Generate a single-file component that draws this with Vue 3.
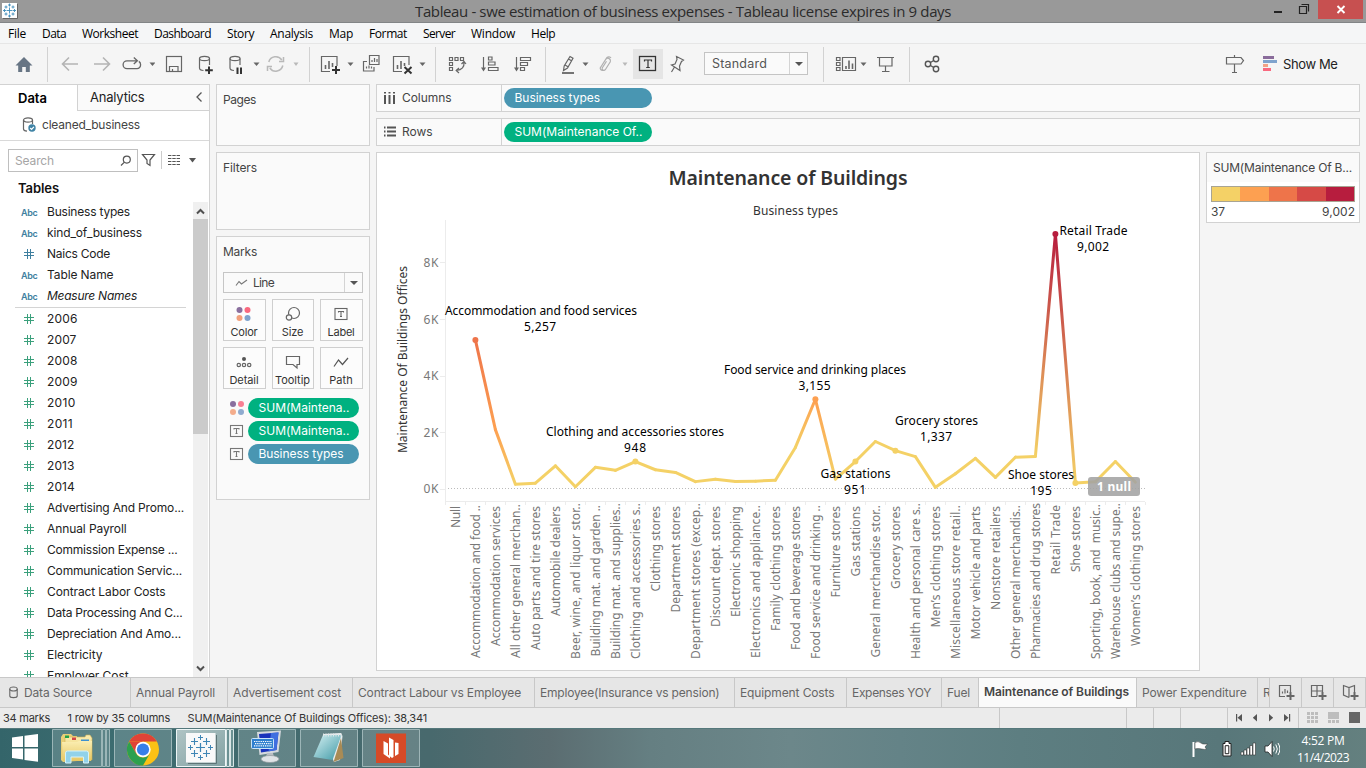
<script setup>
// v-fit: spreads a label's letters evenly so that it takes the given width
const vFit = {
  mounted(el, { value }) {
    const natural = el.getBoundingClientRect().width
    const count = el.textContent.trim().length
    if (value && count) el.style.letterSpacing = (value - natural) / count + 'px'
  },
}

const menus = [
  ['File', 18, 20], ['Data', 24, 18], ['Worksheet', 56, 16], ['Dashboard', 57, 16], ['Story', 27, 16],
  ['Analysis', 43, 16], ['Map', 24, 16], ['Format', 38, 16], ['Server', 32, 16], ['Window', 44, 16], ['Help', 24, 16],
]

const dimensions = [
  ['Business types', 83, 'abc'], ['kind_of_business', 95, 'abc'], ['Naics Code', 63, 'num'],
  ['Table Name', 66.5, 'abc'], ['Measure Names', 90, 'abc', true],
]
const measures = [
  ['2006', 30.5], ['2007', 29.5], ['2008', 30.5], ['2009', 30.5], ['2010', 28.5], ['2011', 26], ['2012', 27.5],
  ['2013', 27.5], ['2014', 28], ['Advertising And Promo...', 137], ['Annual Payroll', 79.5],
  ['Commission Expense ...', 130.5], ['Communication Servic...', 135], ['Contract Labor Costs', 118.5],
  ['Data Processing And C...', 135.5], ['Depreciation And Amo...', 134], ['Electricity', 55.5], ['Employer Cost', 81.5],
]

const palette = ['#f4d166', '#fda051', '#ee744a', '#d64a46', '#b71d3e']
const series = [
  [5257, 'Accommodation and food ..', 505, 658], [2080, 'Accommodation services', 506, 646],
  [150, 'All other general merchan..', 504, 658], [185, 'Auto parts and tire stores', 506, 650],
  [800, 'Automobile dealers', 506, 616], [60, 'Beer, wine, and liquor stor..', 503, 659],
  [745, 'Building mat. and garden ..', 505, 656.5], [640, 'Building mat. and supplies..', 503, 659],
  [948, 'Clothing and accessories s..', 503, 659], [660, 'Clothing stores', 506, 591.5],
  [565, 'Department stores', 506, 612.5], [240, 'Department stores (excep..', 503, 659],
  [320, 'Discount dept. stores', 506, 627], [245, 'Electronic shopping', 506, 617],
  [255, 'Electronics and appliance..', 505, 658], [290, 'Family clothing stores', 506, 631],
  [1450, 'Food and beverage stores', 506, 650], [3155, 'Food service and drinking ..', 505, 659],
  [330, 'Furniture stores', 506, 597.5], [951, 'Gas stations', 506, 576.5],
  [1660, 'General merchandise stor..', 505, 657.5], [1337, 'Grocery stores', 506, 589],
  [1125, 'Health and personal care s..', 503, 659], [37, 'Men’s clothing stores', 506, 627.5],
  [520, 'Miscellaneous store retail..', 505, 659], [1065, 'Motor vehicle and parts', 506, 639.5],
  [390, 'Nonstore retailers', 506, 610], [1105, 'Other general merchandis..', 505, 659],
  [1130, 'Pharmacies and drug stores', 503, 659], [9002, 'Retail Trade', 505, 574.5],
  [195, 'Shoe stores', 506, 572], [235, 'Sporting, book, and  music..', 504, 659],
  [950, 'Warehouse clubs and supe..', 503, 659], [220, 'Women’s clothing stores', 506, 646],
]
const px = (i) => 475.4 + i * 20
const py = (v) => 488.4 - v * 0.02825
const tone = (v) => palette[Math.min(4, Math.floor((v - 37) / 1793))]
const segments = series.slice(1).map((s, i) => ({
  id: 'seg' + i,
  x1: px(i), y1: py(series[i][0]), x2: px(i + 1), y2: py(s[0]),
  from: tone(series[i][0]), to: tone(s[0]),
}))
const dots = [0, 8, 17, 19, 21, 29, 30].map((i) => ({ x: px(i), y: py(series[i][0]), c: tone(series[i][0]) }))
const axisLabels = [{ x: 455.4, name: 'Null', top: 506, len: 22 }].concat(
  series.map((s, i) => ({ x: px(i), name: s[1], top: s[2], len: s[3] - s[2] })),
)
const notes = [
  ['Accommodation and food services', 541, 315, 192, '5,257', 540, 331, 32],
  ['Clothing and accessories stores', 635, 436, 178, '948', 635, 452, 22],
  ['Food service and drinking places', 815, 374, 182, '3,155', 814.5, 390, 32],
  ['Grocery stores', 936.5, 425, 83, '1,337', 936, 441, 32],
  ['Gas stations', 855.5, 478, 70, '951', 855, 494, 22],
  ['Shoe stores', 1041, 479, 66, '195', 1041, 495, 21.5],
  ['Retail Trade', 1093.5, 235, 68, '9,002', 1093, 251, 32],
]
const ticks = [['8K', 262.4], ['6K', 319.4], ['4K', 375.6], ['2K', 432.4], ['0K', 488.5]]

const sheets = [
  ['Annual Payroll', 97, 79], ['Advertisement cost', 125, 108], ['Contract Labour vs Employee', 182, 163],
  ['Employee(Insurance vs pension)', 200, 179.5], ['Equipment Costs', 112, 94.5], ['Expenses YOY', 95, 79],
  ['Fuel', 37, 23], ['Maintenance of Buildings', 158, 145, true], ['Power Expenditure', 121, 104.5], ['R', 12, 8],
]
</script>

<template>
  <div class="screen">
    <header class="titlebar">
      <svg width="24" height="23">
        <rect x="2" y="3" width="15" height="15" fill="#fff" />
        <path d="M17.500 4v14.500H3" stroke="#666" fill="none" />
        <path d="M9.500 7.500v6M6.500 10.500h6M9.500 3.500v3M8 5h3M9.500 14.500v3M8 16h3M3 10.500h3M4.500 9v3M13 10.500h3M14.500 9v3M6 5.500v3M4.500 7h3M13 5.500v3M11.500 7h3M6 12.500v3M4.500 14h3M13 12.500v3M11.500 14h3" stroke="#3f8dbb" stroke-width=".9" fill="none" />
      </svg>
      <span class="t caption" v-fit="536">Tableau - swe estimation of business expenses - Tableau license expires in 9 days</span>
      <svg class="winbtns" width="96" height="23" viewBox="1270 0 96 23">
        <path d="M1274 12h8" stroke="#222" stroke-width="2" />
        <path d="M1299.500 6.500h7v7h-7zM1301.500 4.500h7v7" stroke="#222" stroke-width="1.200" fill="none" />
        <rect x="1318" y="0" width="45" height="19" fill="#c75050" />
        <path d="M1337.500 6l7 7M1344.500 6l-7 7" stroke="#fff" stroke-width="1.900" />
      </svg>
    </header>

    <nav class="menubar">
      <span v-for="m in menus" :key="m[0]" class="t" v-fit="m[1]">{{ m[0] }}</span>
    </nav>

    <section class="toolbar">
      <svg width="48" height="40" viewBox="0 44 48 40">
        <path d="M24 57l8.500 8.500h-2.700V72h-4v-5h-3.600v5h-4v-6.500h-2.700z" fill="#677584" />
        <path d="M47.500 47v35" stroke="#d2d2d2" />
      </svg>
      <svg width="107" height="40" viewBox="48 44 107 40" fill="none">
        <path d="M78 64H63M69 57.500L62.500 64l6.500 6.500M94 64h15M103 57.500l6.500 6.500-6.500 6.500" stroke="#b4b4b4" stroke-width="1.600" />
        <path d="M136.500 60.800H127a3.900 3.900 0 000 7.800h10a3.700 3.700 0 003.600-3.800c0-1.500-.6-2.700-1.800-3.400M133.800 57.500l3.600 3.300-3.600 3.300" stroke="#666" stroke-width="1.300" />
        <path d="M149.500 62.500h6l-3 3.500z" fill="#666" />
      </svg>
      <svg width="154" height="40" viewBox="155 44 154 40" fill="none" stroke="#666" stroke-width="1.200">
        <rect x="166.500" y="56.500" width="15" height="15" /><path d="M169.500 71v-4.500h8.500V71M172.500 71v-2" />
        <ellipse cx="204.500" cy="58.500" rx="5" ry="2.200" /><path d="M199.500 58.500v9.500c0 1.500 1.500 2.300 4 2.500M209.500 58.500V65" />
        <path d="M209 66.500v7.500M205.200 70.200h7.600" stroke="#333" stroke-width="2" />
        <ellipse cx="235" cy="58.500" rx="5" ry="2.200" /><path d="M230 58.500v9.500c0 1.500 1.500 2.300 4 2.500M240 58.500V65" />
        <path d="M237.500 67.500v6.500M241 67.500v6.500" stroke="#333" stroke-width="2" />
        <path d="M253.500 62.500h6l-3 3.500z" fill="#666" stroke="none" />
        <g stroke="#b9b9b9" stroke-width="1.500"><path d="M268.800 62a7.200 7.200 0 0113-2M282.800 65.500a7.200 7.200 0 01-13 2.500M283.500 57v4.500h-4.500M267.500 71v-4.500h4.500" /></g>
        <path d="M293.500 62.500h5l-2.500 3.500z" fill="#b9b9b9" stroke="none" />
      </svg>
      <svg width="126" height="40" viewBox="309 44 126 40" fill="none" stroke="#666" stroke-width="1.200">
        <path d="M309.500 47v35" stroke="#d2d2d2" stroke-width="1" />
        <path d="M330 71.500h-8.500v-15h15.500V66" /><path d="M325.500 65v4M329 61v8M332.500 63v4" stroke-width="1.600" />
        <path d="M336 66v8M332 70h8" stroke="#333" stroke-width="2" />
        <path d="M347.500 62.500h6l-3 3.500z" fill="#666" stroke="none" />
        <path d="M369.500 55.500h9.500v9h-9.500zM367 61.500h-3.500v9.500H374v-4M366.500 66.500v2M369 65.500v3M371.500 66.500v2M372 60v2M374.500 58v4M377 59v3" />
        <path d="M402 71.500h-8.500v-15h15.500V65" /><path d="M397.500 65v4M401 61v8M404.500 63v3" stroke-width="1.600" />
        <path d="M404.500 67l7 6.500M411.500 67l-7 6.500" stroke="#333" stroke-width="2" />
        <path d="M419.500 62.500h6l-3 3.500z" fill="#666" stroke="none" />
      </svg>
      <svg width="110" height="40" viewBox="435 44 110 40" fill="none" stroke="#666" stroke-width="1.200">
        <path d="M435.500 47v35" stroke="#d2d2d2" stroke-width="1" />
        <path d="M449.500 57.500h3v3h-3zM455 57.500h3v3h-3zM460.500 57.500h3v3h-3zM449.500 62.500h3v3h-3zM449.500 67.500h3v3h-3zM464 62c.5 5-2 8-7.500 8.500M461.500 64l2.500-2.500 2 2.500M459 68l-2.800 2.500L459 73" />
        <path d="M483.500 57v12" /><path d="M481 67.500h5l-2.500 4zM514 67.500h5l-2.500 4z" fill="#666" stroke="none" /><path d="M516.500 57v12" />
        <path d="M488.500 57h3.500v3h-3.500zM488.500 62h6.500v3h-6.500zM488.500 67.500h9.500v3h-9.500zM520.500 57.500h10v3h-10zM520.500 62.500h7v3h-7zM520.500 67.500h4v3h-4z" />
      </svg>
      <svg width="88" height="40" viewBox="545 44 88 40" fill="none" stroke="#666" stroke-width="1.200">
        <path d="M545.500 47v35" stroke="#d2d2d2" stroke-width="1" />
        <path d="M570 56.500l3 1.700-5.500 9.800-4 2.500.7-4.500zM565 65l3 1.800M568.500 59l3 1.800" /><path d="M562 73h12" stroke-width="1.800" />
        <path d="M582.500 62.500h6l-3 3.500z" fill="#666" stroke="none" />
        <path d="M600.500 67.500l5.500-8.500a2.600 2.600 0 014.300 2.700l-5 8a1.800 1.800 0 01-3.100-1.700l4.300-6.700M605 60.500l2-3a2.600 2.600 0 014 .5M600.500 67c-1 2.500 1 4 3 3" stroke="#b0b0b0" />
        <path d="M622.500 62.500h5l-2.500 3.500z" fill="#b9b9b9" stroke="none" />
      </svg>
      <div class="labelbtn">
        <svg width="30" height="30" viewBox="633 49 30 30" fill="none" stroke="#333" stroke-width="1.300">
          <rect x="639.500" y="56.500" width="16" height="14" />
          <path d="M644.500 61.500v-1.500h7v1.500M648 60v7.500M646.200 67.500h3.600" stroke-width="1.200" />
        </svg>
      </div>
      <svg class="pin" width="41" height="40" viewBox="663 44 41 40" fill="none" stroke="#666" stroke-width="1.200">
        <path d="M676.500 56.500l7 3.500-2 1.500-2 4.500.5 4.500-8.500-5.500 3.500-1 2-4.500zM674.500 67l-3 5" />
      </svg>
      <div class="fitbox"><span class="t" v-fit="55">Standard</span><i class="caret"></i></div>
      <svg width="109" height="40" viewBox="808 44 109 40" fill="none" stroke="#666" stroke-width="1.200">
        <path d="M823.500 47v35M909.500 47v35" stroke="#d2d2d2" stroke-width="1" />
        <path d="M842.500 57.500h13v13h-13zM836.500 57.500h3.500v3h-3.500zM836.500 62.500h3.500v3h-3.500zM836.500 67.500h3.500v3h-3.500z" />
        <path d="M846 66v3M849 60.500V69M852.500 63.500V69" stroke-width="1.600" />
        <path d="M860.500 62.500h6l-3 3.500z" fill="#666" stroke="none" />
        <path d="M877 57.500h17M879.500 57.500v8.500h12.500v-8.500M885.500 66v5M882 71.500h7.500" />
      </svg>
      <svg width="40" height="40" viewBox="917 44 40 40" fill="none" stroke="#555" stroke-width="1.400">
        <circle cx="936" cy="59" r="2.700" /><circle cx="928" cy="64" r="2.700" /><circle cx="936" cy="69" r="2.700" />
        <path d="M930.500 62.500l3.200-2M930.500 65.500l3.200 2" />
      </svg>
      <div class="showme">
        <svg width="60" height="40" viewBox="1222 44 60 40" fill="none">
          <path d="M1226.500 57.500h14.500l2.500 3-2.500 3.500h-14.500zM1234.500 55v2.500M1234.500 64v8M1232 72.500h5" stroke="#666" stroke-width="1.200" />
          <path d="M1263 57.500h11" stroke="#8a6c9b" stroke-width="3" /><path d="M1263 61.500h14" stroke="#7fa3cd" stroke-width="3" />
          <path d="M1263 65.500h5" stroke="#f2a285" stroke-width="3" /><path d="M1263 69.500h8" stroke="#f9697f" stroke-width="3" />
        </svg>
        <span class="t" v-fit="54.500">Show Me</span>
      </div>
    </section>

    <main class="work">
      <aside class="side">
        <div class="tabs">
          <div class="tab on"><span class="t" v-fit="29">Data</span></div>
          <div class="tab"><span class="t" v-fit="54.500">Analytics</span>
            <svg width="8" height="12"><path d="M6.500 1.500L2 6l4.500 4.500" fill="none" stroke="#555" stroke-width="1.300" /></svg>
          </div>
        </div>
        <div class="source">
          <svg width="16" height="18" fill="none" stroke="#666" stroke-width="1.200">
            <ellipse cx="6" cy="4" rx="4.500" ry="2.200" /><path d="M1.500 4v9c0 1.200 1.500 2 3.500 2.200M10.500 4v4" />
            <circle cx="10" cy="12" r="3.700" fill="#3f83a5" stroke="none" /><path d="M8.200 12l1.400 1.400 2.300-2.600" stroke="#fff" />
          </svg>
          <span class="t" v-fit="98">cleaned_business</span>
        </div>
        <div class="searchrow">
          <div class="search"><span class="t" v-fit="39">Search</span>
            <svg width="12" height="12" fill="none" stroke="#555" stroke-width="1.200"><circle cx="6.800" cy="4.600" r="3.500" /><path d="M4.200 7.300L1 10.500" /></svg>
          </div>
          <svg width="60" height="22" viewBox="141 149 60 22">
            <path d="M142.500 154.500h12l-4.500 5.500v5.500l-3-2v-3.500z" fill="none" stroke="#555" stroke-width="1.200" />
            <path d="M161.500 151v18" stroke="#ccc" />
            <path d="M168 155.500h12M168 158.500h12M168 161.500h12M168 164.500h12" stroke="#555" stroke-dasharray="3.400 .9" stroke-width="1.200" />
            <path d="M189 158h7l-3.500 4.500z" fill="#555" />
          </svg>
        </div>
        <h3><span class="t" v-fit="41">Tables</span></h3>
        <div class="fields">
          <ul class="list">
            <li v-for="d in dimensions" :key="d[0]">
              <span v-if="d[2] === 'abc'" class="abc"><b class="t" v-fit="16.500">Abc</b></span>
              <svg v-else class="hash" width="10" height="10"><path d="M3.500 0v10M6.500 0v10M0 3.500h10M0 6.500h10" stroke="#3f7f9f" /></svg>
              <span class="t" :class="{ it: d[3] }" v-fit="d[1]">{{ d[0] }}</span>
            </li>
            <li class="rule"></li>
            <li v-for="m in measures" :key="m[0]">
              <svg class="hash" width="10" height="10"><path d="M3.500 0v10M6.500 0v10M0 3.500h10M0 6.500h10" stroke="#3ba07c" /></svg>
              <span class="t" v-fit="m[1]">{{ m[0] }}</span>
            </li>
          </ul>
          <div class="scroll">
            <svg width="15" height="17"><path d="M4 11.500L7.500 8l3.500 3.500" fill="none" stroke="#505050" stroke-width="2" /></svg>
            <i></i>
            <svg width="15" height="17"><path d="M4 6.500L7.500 10 11 6.500" fill="none" stroke="#505050" stroke-width="2" /></svg>
          </div>
        </div>
      </aside>

      <div class="cards">
        <section class="card pages"><span class="t" v-fit="33">Pages</span></section>
        <section class="card filters"><span class="t" v-fit="34">Filters</span></section>
        <section class="card marks">
          <span class="t" v-fit="34">Marks</span>
          <div class="select">
            <svg width="14" height="8"><path d="M1 6.500l3-4 2.500 2.500L12 1" fill="none" stroke="#777" stroke-width="1.100" /></svg>
            <span class="t" v-fit="21">Line</span><i class="caret"></i>
          </div>
          <div class="grid">
            <div>
              <svg width="20" height="20"><circle cx="5.500" cy="6" r="3" fill="#8a6f9e" /><circle cx="13.500" cy="6" r="3" fill="#f9697f" /><circle cx="5.500" cy="14" r="3" fill="#f2a07c" /><circle cx="13.500" cy="14" r="3" fill="#7fa3cd" /></svg>
              <span class="t" v-fit="27">Color</span>
            </div>
            <div>
              <svg width="20" height="20" fill="none" stroke="#666" stroke-width="1.200"><circle cx="11" cy="9" r="5.500" /><circle cx="6" cy="13.500" r="2.700" fill="#fcfcfc" /></svg>
              <span class="t" v-fit="21.500">Size</span>
            </div>
            <div>
              <svg width="20" height="20" fill="none" stroke="#666" stroke-width="1.100"><rect x="4" y="4.500" width="12" height="11" /><path d="M7.500 8.500v-1h5v1M10 7.500v5M9 12.500h2" /></svg>
              <span class="t" v-fit="27">Label</span>
            </div>
            <div>
              <svg width="20" height="20" fill="none" stroke="#666" stroke-width="1.200"><circle cx="10" cy="7" r="2" fill="#555" stroke="none" /><circle cx="4.800" cy="13" r="1.700" /><circle cx="10" cy="13" r="1.700" /><circle cx="15.200" cy="13" r="1.700" /></svg>
              <span class="t" v-fit="29">Detail</span>
            </div>
            <div>
              <svg width="20" height="20" fill="none" stroke="#666" stroke-width="1.200"><path d="M3.500 4.500h13v8h-2.500v3.500l-4-3.500H3.500z" /></svg>
              <span class="t" v-fit="35">Tooltip</span>
            </div>
            <div>
              <svg width="20" height="20" fill="none" stroke="#555" stroke-width="1.200"><path d="M3 14.500l4.500-6.500 4 4.500L17 6" /></svg>
              <span class="t" v-fit="23.500">Path</span>
            </div>
          </div>
          <div class="enc">
            <svg width="18" height="20"><circle cx="4" cy="6" r="3" fill="#8a6f9e" /><circle cx="12" cy="6" r="3" fill="#f98093" /><circle cx="4" cy="14" r="3" fill="#f4ad8c" /><circle cx="12" cy="14" r="3" fill="#8fabcf" /></svg>
            <div class="pill green"><span class="t" v-fit="91">SUM(Maintena..</span></div>
          </div>
          <div class="enc">
            <svg width="18" height="20" fill="none" stroke="#777" stroke-width="1.100"><rect x="1.500" y="4.500" width="12" height="11" /><path d="M5 8.500v-1h5v1M7.500 7.500v5M6.500 12.500h2" /></svg>
            <div class="pill green"><span class="t" v-fit="91">SUM(Maintena..</span></div>
          </div>
          <div class="enc">
            <svg width="18" height="20" fill="none" stroke="#777" stroke-width="1.100"><rect x="1.500" y="4.500" width="12" height="11" /><path d="M5 8.500v-1h5v1M7.500 7.500v5M6.500 12.500h2" /></svg>
            <div class="pill blue"><span class="t" v-fit="85">Business types</span></div>
          </div>
        </section>
      </div>

      <div class="canvas">
        <div class="shelf">
          <div class="name">
            <svg width="18" height="16"><path d="M1 2v1.500M1 5v9M5.500 2v1.500M5.500 5v9M10 2v1.500M10 5v9" stroke="#555" stroke-width="2" /></svg>
            <span class="t" v-fit="49.500">Columns</span>
          </div>
          <div class="pill blue"><span class="t" v-fit="85.500">Business types</span></div>
        </div>
        <div class="shelf">
          <div class="name">
            <svg width="18" height="16"><path d="M0 3.500h1.500M3 3.500h9M0 7.500h1.500M3 7.500h9M0 11.500h1.500M3 11.500h9" stroke="#555" stroke-width="1.800" /></svg>
            <span class="t" v-fit="30.500">Rows</span>
          </div>
          <div class="pill green"><span class="t" v-fit="128">SUM(Maintenance Of..</span></div>
        </div>
        <div class="stage">
          <div class="viz">
            <svg width="822" height="517" viewBox="377 153 822 517">
              <defs>
                <linearGradient v-for="s in segments" :id="s.id" :key="s.id" gradientUnits="userSpaceOnUse" :x1="s.x1" :y1="s.y1" :x2="s.x2" :y2="s.y2">
                  <stop offset="0" :stop-color="s.from" /><stop offset="1" :stop-color="s.to" />
                </linearGradient>
              </defs>
              <text x="788" y="185" class="ctitle" textLength="239">Maintenance of Buildings</text>
              <text x="795.500" y="215" class="chead" textLength="85">Business types</text>
              <text transform="translate(406.500 359.500) rotate(-90)" class="chead" textLength="187">Maintenance Of Buildings Offices</text>
              <path d="M445.500 220v285M445 501.500h700" stroke="#ececec" fill="none" />
              <path v-for="n in 35" :key="n" :d="`M${445.500 + n * 20} 502v3`" stroke="#ececec" />
              <path d="M448 488.500h697" stroke="#bbb" stroke-dasharray="1 2" />
              <g v-for="k in ticks" :key="k[0]">
                <path :d="`M440 ${Math.round(k[1]) + 0.500}h5`" stroke="#ececec" />
                <text x="438.500" :y="k[1] + 4.500" class="tick" textLength="15">{{ k[0] }}</text>
              </g>
              <text v-for="a in axisLabels" :key="a.name" class="xl" :transform="`translate(${a.x + 4.300} ${a.top}) rotate(-90)`" :textLength="a.len">{{ a.name }}</text>
              <line v-for="s in segments" :key="s.id" :x1="s.x1" :y1="s.y1" :x2="s.x2" :y2="s.y2" :stroke="`url(#${s.id})`" stroke-width="3" stroke-linecap="round" />
              <circle v-for="d in dots" :key="d.x" :cx="d.x" :cy="d.y" r="3" :fill="d.c" />
              <g v-for="n in notes" :key="n[0]" class="note">
                <text :x="n[1]" :y="n[2]" :textLength="n[3]">{{ n[0] }}</text>
                <text :x="n[5]" :y="n[6]" :textLength="n[7]">{{ n[4] }}</text>
              </g>
              <rect x="1088" y="477" width="52" height="19" rx="3" fill="#a3a3a3" fill-opacity=".88" />
              <text x="1114" y="491" class="nulls" textLength="34">1 null</text>
            </svg>
          </div>
          <div class="legend">
            <div class="lhead"><span class="t" v-fit="139">SUM(Maintenance Of B...</span></div>
            <div class="ramp"><i class="c1"></i><i class="c2"></i><i class="c3"></i><i class="c4"></i><i class="c5"></i></div>
            <div class="range"><span class="t" v-fit="14">37</span><span class="t" v-fit="33">9,002</span></div>
          </div>
        </div>
      </div>
    </main>

    <nav class="sheets">
      <div class="sheet ds">
        <svg width="10" height="14" fill="none" stroke="#666" stroke-width="1.100"><ellipse cx="4.500" cy="3" rx="3.700" ry="2" /><path d="M.8 3v7c0 2.200 7.400 2.200 7.400 0V3" /></svg>
        <span class="t" v-fit="68">Data Source</span>
      </div>
      <div v-for="s in sheets" :key="s[0]" class="sheet" :class="{ active: s[3] }" :style="{ width: s[1] + 'px' }"><span class="t" v-fit="s[2]">{{ s[0] }}</span></div>
      <div class="sheet new"><svg width="31" height="29" fill="none" stroke="#666" stroke-width="1.200"><path d="M15 18.500H9.500v-11h11V14M12.500 13.500v2M15 11v4.500M17.500 12.500V15" /><path d="M20.500 14v8M16.500 18h8" stroke-width="2" /></svg></div>
      <div class="sheet new"><svg width="31" height="29" fill="none" stroke="#666" stroke-width="1.200"><path d="M15 18.500H9.500v-11h11V14M15 7.500v11M9.500 13h11" /><path d="M20.500 14v8M16.500 18h8" stroke-width="2" /></svg></div>
      <div class="sheet new"><svg width="31" height="29" fill="none" stroke="#666" stroke-width="1.200"><path d="M15 19.500L9.500 17V7.500l5.500 2 5.500-2V14M15 9.500v10" /><path d="M20.500 14v8M16.500 18h8" stroke-width="2" /></svg></div>
    </nav>

    <footer class="status">
      <span class="t" v-fit="47">34 marks</span>
      <span class="t s2" v-fit="102.500">1 row by 35 columns</span>
      <span class="t s3" v-fit="239.500">SUM(Maintenance Of Buildings Offices): 38,341</span>
      <svg width="367" height="20" viewBox="999 708 367 20">
        <path d="M999.500 708v20M1126.500 708v20M1153.500 708v20M1180.500 708v20M1227.500 708v20M1298.500 708v20" stroke="#c8c8c8" />
        <g fill="#555"><path d="M1236 714h1.200v7.500h-1.200zM1242 714v7.500l-4.500-3.700zM1257 714v7.500l-4.200-3.700zM1269 714v7.500l4.200-3.700zM1284 714v7.500l4.500-3.700zM1289 714h1.200v7.500h-1.200z" /></g>
        <g fill="#bdbdbd"><path d="M1307 712h3v3h-3zM1311 712h3v3h-3zM1315 712h3v3h-3zM1307 716h3v3h-3zM1311 716h3v3h-3zM1315 716h3v3h-3zM1307 720h3v3h-3zM1311 720h3v3h-3zM1315 720h3v3h-3zM1328 712h11v7h-11zM1328 720h3v3h-3zM1332 720h3v3h-3zM1336 720h3v3h-3z" /></g>
        <rect x="1349" y="712" width="11" height="11" fill="#666" />
      </svg>
    </footer>

    <footer class="taskbar">
      <svg width="430" height="40" viewBox="0 728 430 40">
        <defs>
          <linearGradient id="glass" x1="0" y1="0" x2="1" y2="1"><stop offset="0" stop-color="#c4d4d4" /><stop offset="1" stop-color="#8eabac" /></linearGradient>
          <linearGradient id="pad" x1="0" y1="0" x2="1" y2="1"><stop offset="0" stop-color="#d5f0f2" /><stop offset="1" stop-color="#3d98a5" /></linearGradient>
          <linearGradient id="fold" x1="0" y1="0" x2="0" y2="1"><stop offset="0" stop-color="#fbeeb2" /><stop offset="1" stop-color="#e6c763" /></linearGradient>
        </defs>
        <path d="M12 737.500l11-1.500v11H12zM24.500 735.800L38 734v13H24.500zM12 748.500h11v11l-11-1.500zM24.500 748.500H38v13.300l-13.500-1.800z" fill="#fff" />
        <g fill="#fff" fill-opacity=".17" stroke="#b6cbcc" stroke-opacity=".75">
          <path d="M52.500 729.500h49v37h-49zM102.500 729.500h3v37h-3zM106.500 729.500h3v37h-3zM114.500 729.500h57v37h-57zM238.500 729.500h57v37h-57zM300.500 729.500h57v37h-57zM362.500 729.500h57v37h-57z" />
        </g>
        <path d="M176.500 729.500h49v37h-49z" fill="url(#glass)" fill-opacity=".85" stroke="#eef6f6" /><path d="M226.500 729.500h3v37h-3zM230.500 729.500h3v37h-3z" fill="#6b9193" stroke="#d9e6e6" />
        <path d="M61 737l2-3h8l2 2h4v25l-14 1-2-2z" fill="#e9cf77" /><path d="M65 737h20l1-2h4l2 3v22H65z" fill="url(#fold)" stroke="#cdae55" stroke-width=".6" />
        <path d="M65 735.500h4v2.500h-4z" fill="#24a148" /><path d="M72 737.500h4v2.500h-4z" fill="#d34545" /><path d="M81 739.500h8v2.500h-8z" fill="#3e91d0" />
        <path d="M62 742h15l2-1h13l-1 20H63z" fill="url(#fold)" />
        <path d="M65.500 763v-10q0-2 2-2h19q2 0 2 2v10h-5v-6H71v6z" fill="#91d2ea" stroke="#d5f2fa" stroke-width="1" />
        <circle cx="143" cy="749.500" r="16" fill="#fbc116" />
        <path d="M129.140 741.500A16 16 0 01156.860 741.500H143z" fill="#df4337" />
        <path d="M129.140 741.500L136.070 753.500L143 749.500V741.500z" fill="#df4337" /><path d="M129.140 741.500L136.070 753.500A8 8 0 00149.930 753.500L143 765.500A16 16 0 01129.140 741.500z" fill="#2da04f" />
        <circle cx="143" cy="749.500" r="7.700" fill="#fff" /><circle cx="143" cy="749.500" r="6.100" fill="#377fe8" />
        <path d="M216.500 735v28.500H188" stroke="#5d7476" fill="none" />
        <rect x="186" y="733" width="29.500" height="29.500" fill="#f9f9f9" />
        <g stroke="#3f86b5" fill="none">
          <path d="M200.500 743v9M196 747.500h9" stroke-width="1.200" />
          <path d="M194.500 738v7M191 741.500h7M206.500 738v7M203 741.500h7M194.500 750v7M191 753.500h7M206.500 750v7M203 753.500h7" stroke-width="1.100" />
          <path d="M200.500 735v5M198 737.500h5M200.500 755v5M198 757.500h5M190.500 745v5M188 747.500h5M210.500 745v5M208 747.500h5" />
        </g>
        <path d="M257 732l24-1.500-2.500 21.500-19 3z" fill="#d5d9de" /><path d="M259 734l19.500-1.500-2 17.500-15.500 2.500z" fill="#1933bb" /><path d="M271 733l7.500-.5-2 17.500-8 1.500z" fill="#3f6ee0" />
        <path d="M267 753h6l1 4h-8z" fill="#b9bec4" /><ellipse cx="270" cy="759" rx="9" ry="3.500" fill="#dfe3e6" stroke="#8f989c" stroke-width=".7" />
        <rect x="251.500" y="738.500" width="22" height="10" rx="1" fill="#2f80cf" stroke="#c9e4fa" /><path d="M254 741.500h18M255 743.700h17M254 745.900h18" stroke="#fff" stroke-dasharray="1.300 .9" stroke-width="1.200" />
        <path d="M323 734l18-1 1.500 3-2.500 24-6 2z" fill="#e9edef" /><path d="M341 738l2.500 20-10 4z" fill="#a98b55" /><path d="M323 735h18.500l-9 25-19-3z" fill="url(#pad)" /><path d="M323 735h18.500" stroke="#dfe6e8" stroke-dasharray="1 1.500" stroke-width="3" />
        <rect x="376" y="733.500" width="30" height="29.500" fill="#d64a27" />
        <path d="M383.500 741l4.500 2.500v11l2 2v2l-6.500-4.500zM389 737.500l4.500 2.500v17l-1.500 1-3-2.500zM395 742.500v13.500l-2.500 1.500 6-3.500v-11z" fill="#fff" />
      </svg>
      <svg class="tray" width="90" height="40" viewBox="1190 728 90 40">
        <path d="M1193.500 742v15" stroke="#fff" stroke-width="2" /><path d="M1195 742.500q3-2 6 .5c2 1.500 4 1 6.500 1l-2.500 3 1.500 2c-3 1.500-6-1.500-11.500 0z" fill="#fff" stroke="#333" stroke-width=".5" />
        <path d="M1225 741.500h4v2h2v12.500h-8v-12.500h2z" fill="#fff" stroke="#222" stroke-width="1" /><path d="M1225.200 745.700h3.600v8h-3.600z" fill="#fff" stroke="#222" stroke-width="1" />
        <path d="M1241 752h2.500v3h-2.500zM1244 750h2.500v5h-2.500zM1247 748h2.500v7h-2.500zM1250 745.500h2.500v9.500h-2.500zM1253 743h2.500v12h-2.500z" fill="#fff" stroke="#333" stroke-width=".6" />
        <path d="M1265 746h3l4-4.500v15l-4-4.500h-3z" fill="#fff" stroke="#222" stroke-width=".8" /><path d="M1273.500 746.500q1.500 2.500 0 5M1275.800 744.500q3 4.500 0 9M1278 743q3.800 6 0 12" stroke="#fff" fill="none" />
      </svg>
      <div class="clock"><span class="t" v-fit="43">4:52 PM</span><span class="t" v-fit="52">11/4/2023</span></div>
    </footer>
  </div>
</template>

<style>
body { background: #f5f5f5; overflow: hidden; }
</style>

<style scoped>
.screen { width: 1366px; height: 768px; display: flex; flex-direction: column; overflow: hidden; background: #f5f5f5; font: 12px/16px Inter, "Noto Sans", sans-serif; color: #333; }
.screen * { box-sizing: border-box; }
svg { display: block; flex: none; }
.t { white-space: pre; flex: none; }
.titlebar { height: 23px; flex: none; display: flex; justify-content: space-between; background: #999; border-bottom: 1px solid #828587; font: 15px/23px "Open Sans", "Noto Sans", sans-serif; color: #2b2b2b; }
.caption { margin-left: 391px; }
.winbtns { margin-left: auto; }
.menubar { height: 21px; flex: none; display: flex; gap: 16px; padding-left: 8px; background: #f5f6f7; border-bottom: 1px solid #e6e6e6; font: 12px/22px "Open Sans", "Noto Sans", sans-serif; color: #000; }
.toolbar { height: 40px; flex: none; display: flex; }
.labelbtn { width: 30px; height: 30px; margin-top: 5px; background: #e5e5e5; }
.fitbox { width: 104px; height: 23px; margin-top: 8px; border: 1px solid #c4c4c4; background: #fafafa; display: flex; align-items: center; justify-content: space-between; padding-left: 7px; font-size: 12.500px; color: #555; }
.caret { width: 18px; height: 100%; border-left: 1px solid #d4d4d4; display: flex; align-items: center; justify-content: center; }
.caret::after { content: ""; border: 4px solid transparent; border-top: 4px solid #555; border-bottom: 0; }
.showme { margin-left: 265px; display: flex; align-items: center; gap: 1px; font-size: 13px; color: #222; }
.work { height: 593px; flex: none; display: flex; gap: 6px; }
.side { width: 210px; background: #fff; border-right: 1px solid #d2d2d2; display: flex; flex-direction: column; }
.tabs { height: 27px; flex: none; display: flex; font-size: 13px; color: #222; }
.tab { width: 132px; background: #fafafa; border: solid #d2d2d2; border-width: 1px 0 1px 1px; padding: 0 6px 1px 12px; display: flex; align-items: center; justify-content: space-between; }
.tab.on { width: 77px; background: #fff; border-width: 1px 0 0; padding: 0 0 0 18px; font-weight: 600; color: #000; }
.source { height: 30px; flex: none; display: flex; align-items: center; gap: 4px; padding: 0 0 1px 22px; border-bottom: 1px solid #d9d9d9; color: #444; }
.searchrow { display: flex; gap: 3px; padding: 8px 0 0 8px; }
.search { width: 130px; height: 23px; border: 1px solid #bfbfbf; display: flex; align-items: center; justify-content: space-between; padding: 0 5px 0 6px; color: #a5a5a5; }
h3 { margin: 8px 0 5px; padding-left: 18px; font: 600 13px/17px Inter, sans-serif; color: #111; }
.fields { flex: 1; min-height: 0; display: flex; justify-content: space-between; overflow: hidden; color: #222; }
.list { margin: -1px 0 0; padding: 0; list-style: none; width: 190px; }
.list li { height: 21px; padding-left: 47px; display: flex; align-items: center; }
.list li.rule { height: 1px; margin: 1px 4px 0 15px; padding: 0; background: #d4d4d4; }
.abc { display: flex; width: 26px; margin-left: -26px; padding-top: 2px; font-size: 9px; color: #3f7f9f; }
.abc b { font-weight: 600; }
.hash { margin: 1px 13px 0 -23px; }
.it { font-style: italic; }
.scroll { width: 15px; margin-right: 1px; background: #f0f0f0; display: flex; flex-direction: column; }
.scroll i { height: 215px; background: #cbcbcb; margin-bottom: auto; }
.cards { width: 154px; display: flex; flex-direction: column; gap: 6px; }
.card { border: 1px solid #d2d2d2; background: #fafafa; padding: 7px 6px 0; color: #444; }
.pages { height: 62px; }
.filters { height: 78px; }
.marks { height: 264px; }
.select { height: 21px; margin-top: 12px; border: 1px solid #c6c6c6; display: flex; align-items: center; padding-left: 11px; gap: 4px; }
.select .caret { margin-left: auto; }
.grid { display: grid; grid-template-columns: 43px 42px 43px; gap: 6px; margin: 6px 0 9px; }
.grid > div { height: 42px; border: 1px solid #cfcfcf; display: flex; flex-direction: column; align-items: center; padding: 4px 1px 0 0; font-size: 11px; line-height: 17px; color: #333; background: #fcfcfc; }
.enc { display: flex; gap: 1px; padding-left: 6px; margin-bottom: 3px; }
.pill { height: 20px; border-radius: 10px; padding-left: 10.500px; display: flex; align-items: center; color: #fff; }
.enc .pill { width: 111px; }
.green { background: #00b180; }
.blue { background: #4996b2; }
.canvas { flex: 1; display: flex; flex-direction: column; gap: 6px; padding-right: 6px; }
.shelf { height: 28px; flex: none; border: 1px solid #d2d2d2; background: #fafafa; display: flex; align-items: center; gap: 2px; }
.shelf .name { width: 125px; height: 100%; border-right: 1px solid #d2d2d2; padding-left: 7px; display: flex; align-items: center; color: #444; }
.shelf .pill { width: 148px; }
.stage { display: flex; gap: 6px; align-items: flex-start; }
.viz { width: 824px; height: 519px; border: 1px solid #d2d2d2; background: #fff; }
.legend { width: 154px; height: 71px; border: 1px solid #d2d2d2; background: #fff; color: #444; }
.lhead { height: 29px; padding: 7px 6px; background: #fafafa; }
.ramp { display: flex; height: 16px; margin: 4px 4px 0; border: 1px solid #a8a493; }
.ramp i { flex: 1; }
.c1 { background: #f4d166; } .c2 { background: #fda051; } .c3 { background: #ee744a; } .c4 { background: #d64a46; } .c5 { background: #b71d3e; }
.range { display: flex; justify-content: space-between; padding: 2px 4px; }
.viz text { font-family: "Noto Sans", sans-serif; font-size: 12px; text-anchor: middle; white-space: pre; }
.viz .ctitle { font-size: 19.500px; font-weight: 600; fill: #333; }
.viz .chead { fill: #333; font-size: 12px; }
.viz .tick { fill: #787878; text-anchor: end; }
.viz .xl { fill: #787878; text-anchor: end; }
.note text { fill: #000; }
.viz .nulls { fill: #fff; font-weight: 700; }
.sheets { height: 31px; flex: none; display: flex; border: solid #c8c8c8; border-width: 1px 0; background: #e6e6e6; color: #666; }
.sheet { flex: none; border-right: 1px solid #c8c8c8; padding-left: 5px; display: flex; align-items: center; overflow: hidden; padding-top: 1px; }
.sheet.ds { width: 131px; padding-left: 9px; gap: 5px; }
.sheet.active { background: #fafafa; font-weight: 600; color: #444; padding: 0 0 1px 5px; }
.sheet.new { width: 32px; padding: 0; }
.status { height: 20px; flex: none; display: flex; align-items: center; background: #ebebeb; font-size: 11px; color: #333; padding-left: 3px; }
.s2 { margin-left: 17.500px; }
.s3 { margin-left: 17.500px; }
.status svg { margin-left: auto; }
.taskbar { height: 40px; flex: none; display: flex; background: linear-gradient(90deg, #34656a 0, #3c6c70 110px, #48696d 430px, #5b6d71 550px, #657f82 650px, #6c878a 790px, #648387 900px, #5d7e81 1020px, #58777a 1220px, #64807f 1366px); box-shadow: inset 0 1px #55787b; }
.tray { margin-left: auto; }
.clock { width: 86px; display: flex; flex-direction: column; align-items: center; padding-top: 4px; font: 12px/17px "Open Sans", "Noto Sans", sans-serif; color: #fff; }
</style>
